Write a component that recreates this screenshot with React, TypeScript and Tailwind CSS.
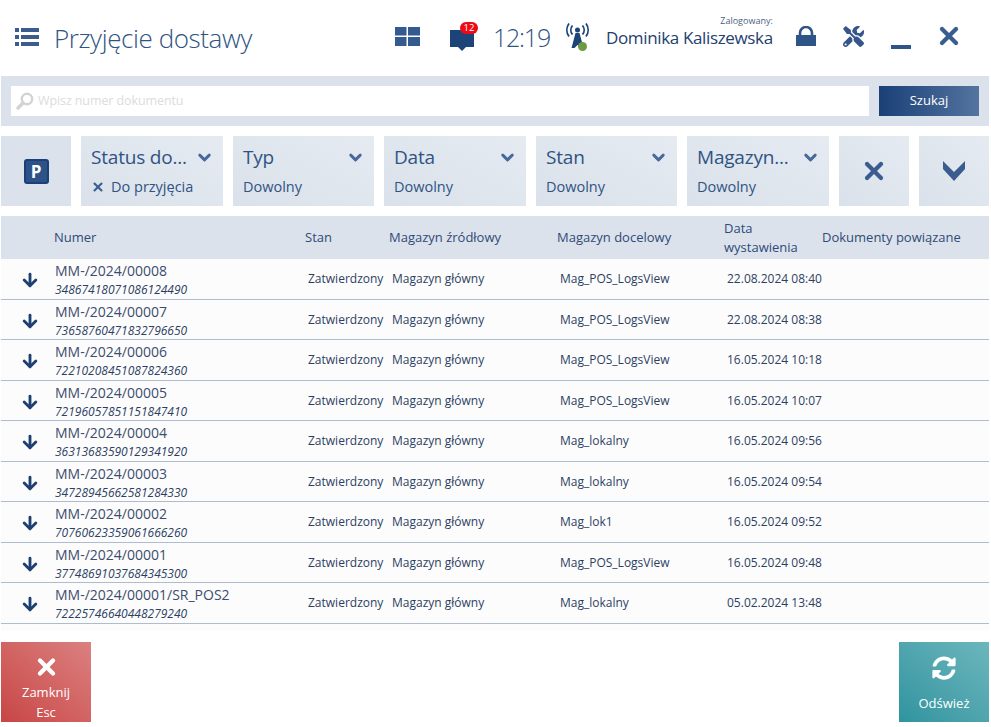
import { ArrowDown, ChevronDown, X } from "lucide-react";
import { FaSyncAlt, FaTools } from "react-icons/fa";

const rows = [
  ["MM-/2024/00008", "3486741807108612449 0".replace(" ", ""), "Mag_POS_LogsView", "22.08.2024 08:40"],
  ["MM-/2024/00007", "7365876047183279665 0".replace(" ", ""), "Mag_POS_LogsView", "22.08.2024 08:38"],
  ["MM-/2024/00006", "7221020845108782436 0".replace(" ", ""), "Mag_POS_LogsView", "16.05.2024 10:18"],
  ["MM-/2024/00005", "7219605785115184741 0".replace(" ", ""), "Mag_POS_LogsView", "16.05.2024 10:07"],
  ["MM-/2024/00004", "3631368359012934192 0".replace(" ", ""), "Mag_lokalny", "16.05.2024 09:56"],
  ["MM-/2024/00003", "3472894566258128433 0".replace(" ", ""), "Mag_lokalny", "16.05.2024 09:54"],
  ["MM-/2024/00002", "7076062335906166626 0".replace(" ", ""), "Mag_lok1", "16.05.2024 09:52"],
  ["MM-/2024/00001", "37748691037684345300", "Mag_POS_LogsView", "16.05.2024 09:48"],
  ["MM-/2024/00001/SR_POS2", "72225746640448279240", "Mag_lokalny", "05.02.2024 13:48"],
];

const filters = [
  { label: "Status do...", value: "Do przyjęcia", width: "w-[142px]", clearable: true },
  { label: "Typ", value: "Dowolny", width: "w-[141px]" },
  { label: "Data", value: "Dowolny", width: "w-[142px]" },
  { label: "Stan", value: "Dowolny", width: "w-[141px]" },
  { label: "Magazyn...", value: "Dowolny", width: "w-[142px]" },
];

const gridCols = "grid grid-cols-[53px_251px_84px_168px_167px_98px_1fr]";

const FilterTile = ({ label, value, width, clearable }: { label: string; value: string; width: string; clearable?: boolean }) => (
  <div className={`${width} h-[70px] bg-linear-to-tr from-[#dae1ea] to-[#e6ebf2] pl-[10px] pr-[9px] pt-[7px] text-[#2f5383]`}>
    <div className="flex h-[28px] items-center justify-between">
      <span className="text-[19px] leading-[28px] tracking-[-0.2px]">{label}</span>
      <ChevronDown size={19} strokeWidth={3.6} className="text-[#46689a]" />
    </div>
    <div className="mt-[5px] flex items-center gap-[6px] text-[14.5px] leading-[22px]">
      {clearable && <X size={14} strokeWidth={3.6} className="text-[#3c5f92]" />}
      <span>{value}</span>
    </div>
  </div>
);

const Row = ({ row }: { row: string[] }) => (
  <div className={`${gridCols} h-[40.5px] border-b border-[#aebccf] text-[#2c3f63]`}>
    <div className="flex items-center justify-center pl-[5px] pt-[2px]">
      <ArrowDown size={20} strokeWidth={3.4} className="text-[#1d3f73]" />
    </div>
    <div className="pl-[1px]">
      <div className="pt-[2px] text-[14px] leading-[20px] text-[#3c4d6e]">{row[0]}</div>
      <div className="text-[12px] italic leading-[18px]">{row[1]}</div>
    </div>
    <div className="flex items-center overflow-hidden pl-[3px] pr-[9px]">
      <span className="whitespace-nowrap text-[12px]">Zatwierdzony</span>
    </div>
    <div className="flex items-center pl-[3px] text-[12px]">Magazyn główny</div>
    <div className="flex items-center pl-[3px] text-[12px]">{row[2]}</div>
    <div className="flex items-center overflow-hidden pl-[3px] pr-[14px]">
      <span className="whitespace-nowrap text-[12px]">{row[3]}</span>
    </div>
    <div />
  </div>
);

export default function App() {
  return (
    <div className="h-[727px] w-[991px] bg-white pl-px pr-[2px] font-['Open_Sans',sans-serif]">
      <header className="flex h-[76px] items-center text-[#2f5383]">
        <svg width="24" height="18" viewBox="0 0 24 18" className="ml-[14px] mt-[-2px] shrink-0" fill="#3a5c8f">
          <rect x="0" y="0" width="4" height="4" />
          <rect x="6" y="0" width="18" height="4" />
          <rect x="0" y="7" width="4" height="4" />
          <rect x="6" y="7" width="18" height="4" />
          <rect x="0" y="14" width="4" height="4" />
          <rect x="6" y="14" width="18" height="4" />
        </svg>
        <h1 className="ml-[15px] text-[26px] font-light leading-[36px] tracking-[-0.4px]">Przyjęcie dostawy</h1>
        <svg width="25" height="19" viewBox="0 0 25 19" className="ml-[143px] mt-[-3px] shrink-0" fill="#355a8f">
          <rect x="0" y="0" width="11.5" height="8.5" />
          <rect x="13" y="0" width="12" height="8.5" />
          <rect x="0" y="10" width="11.5" height="9" />
          <rect x="13" y="10" width="12" height="9" />
        </svg>
        <div className="relative ml-[30px] mt-[2px] shrink-0">
          <svg width="24" height="24" viewBox="0 0 24 24" fill="#1d4478">
            <path d="M0 3h24v17h-8l-4 4-4-4H0z" />
          </svg>
          <span className="absolute left-[10px] top-[-5px] flex h-[12px] w-[18px] items-center justify-center rounded-full bg-[#ee0a15] text-[9.5px] leading-none text-white">12</span>
        </div>
        <div className="ml-[19px] font-light text-[25px] tracking-[-1.2px]">12:19</div>
        <div className="relative ml-[15px] mt-[-4px] shrink-0">
          <svg width="25" height="26" viewBox="0 0 25 26" fill="none">
            <path d="M10.5 10 L6.5 25 H9.5 L12.5 22 L15.5 25 H18.5 L14.5 10 Z" fill="#1d4478" />
            <circle cx="12.5" cy="7" r="2.5" fill="#1d4478" />
            <path d="M7.5 2.5 A7 7 0 0 0 7.5 11.5 M17.5 2.5 A7 7 0 0 1 17.5 11.5 M4 0.5 A11 11 0 0 0 4 13.5 M21 0.5 A11 11 0 0 1 21 13.5" stroke="#1d4478" strokeWidth="1.8" />
          </svg>
          <span className="absolute left-[13px] top-[19px] h-[9px] w-[9px] rounded-full bg-[#6d9a44]" />
        </div>
        <div className="relative ml-[16px] text-[17px] tracking-[-0.35px] text-[#23406f]">
          <span className="absolute right-0 top-[-11px] text-[9px] tracking-normal text-[#4c5f80]">Zalogowany:</span>
          Dominika Kaliszewska
        </div>
        <svg width="20" height="20" viewBox="0 0 20 20" className="ml-[23px] mt-[-4px] shrink-0" fill="#2f5487">
          <path d="M0 9h20v11H0z" />
          <path d="M4 10V7a6 6 0 0 1 12 0v3" fill="none" stroke="#2f5487" strokeWidth="2.6" />
        </svg>
        <FaTools size={21} className="ml-[27px] mt-[-4px] shrink-0 text-[#34568a]" />
        <div className="ml-[27px] mt-[18px] h-[4px] w-[20px] shrink-0 bg-[#2f5487]" />
        <X size={28} strokeWidth={3.6} className="ml-[24px] mt-[-4px] shrink-0 text-[#3a5c8f]" />
      </header>

      <div className="flex h-[50px] items-center gap-[10px] bg-[#dce2eb] px-[10px]">
        <div className="flex h-[30px] flex-1 items-center bg-white pl-[5px]">
          <svg width="18" height="18" viewBox="0 0 18 18" fill="none" className="shrink-0">
            <circle cx="11" cy="7" r="5.2" stroke="#d3d3d3" strokeWidth="2.4" />
            <path d="M7 11 L2 16" stroke="#d3d3d3" strokeWidth="3.4" strokeLinecap="round" />
          </svg>
          <span className="ml-[4px] text-[12.5px] tracking-[-0.1px] text-[#dcdcdc]">Wpisz numer dokumentu</span>
        </div>
        <button className="h-[30px] w-[100px] bg-linear-to-r from-[#1a4077] to-[#54749f] text-[13px] text-white">Szukaj</button>
      </div>

      <div className="mt-[10px] flex h-[70px] gap-[10px]">
        <div className="flex w-[70px] items-center justify-center bg-[#dce2eb]">
          <div className="flex h-[25px] w-[25px] items-center justify-center rounded-[3px] border-[2px] border-[#1d3f73] bg-[#2c5288] text-[17px] font-bold leading-none text-white">P</div>
        </div>
        {filters.map((f) => (
          <FilterTile key={f.label} {...f} />
        ))}
        <div className="flex w-[70px] items-center justify-center bg-linear-to-tr from-[#dae1ea] to-[#e6ebf2]">
          <X size={28} strokeWidth={3.6} className="text-[#3a5c8f]" />
        </div>
        <div className="flex w-[70px] items-center justify-center bg-linear-to-tr from-[#dae1ea] to-[#e6ebf2]">
          <svg width="22" height="20" viewBox="0 0 22 20" fill="#3a5c8f">
            <path d="M0 0 L11 11 L22 0 V8 L11 20 L0 8 Z" />
          </svg>
        </div>
      </div>

      <div className="mt-[10px] bg-[#fcfcfc] pb-[7px]">
        <div className={`${gridCols} h-[43px] items-center bg-[#dce2eb] text-[13px] text-[#2f4a78]`}>
          <div />
          <div>Numer</div>
          <div>Stan</div>
          <div>Magazyn źródłowy</div>
          <div>Magazyn docelowy</div>
          <div className="leading-[19px]">Data<br />wystawienia</div>
          <div className="whitespace-nowrap">Dokumenty powiązane</div>
        </div>
        {rows.map((r) => (
          <Row key={r[1]} row={r} />
        ))}
      </div>

      <div className="mt-[11px] flex justify-between">
        <button className="flex h-[80px] w-[90px] flex-col items-center bg-linear-to-tr from-[#c74545] to-[#db8080] pt-[12px] text-[13px] leading-[20px] text-white">
          <X size={31} strokeWidth={4} />
          <span className="mt-[2px]">Zamknij</span>
          <span>Esc</span>
        </button>
        <button className="flex h-[80px] w-[90px] flex-col items-center bg-linear-to-tr from-[#2e949f] to-[#6cb6bd] pt-[14px] text-[13px] leading-[20px] text-white">
          <FaSyncAlt size={24} />
          <span className="mt-[13px]">Odśwież</span>
        </button>
      </div>
    </div>
  );
}
